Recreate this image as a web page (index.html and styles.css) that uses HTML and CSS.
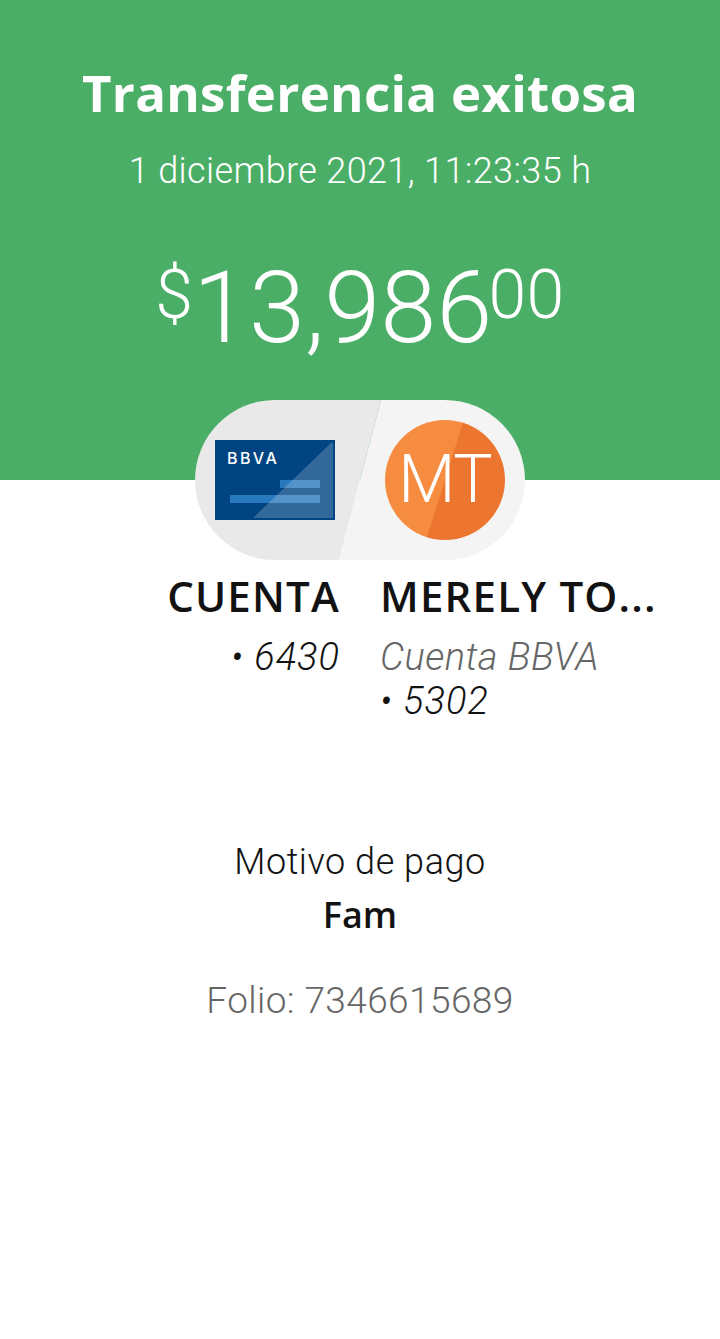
FILE: index.html
```html
<!DOCTYPE html>
<html lang="es">
<head>
<meta charset="utf-8">
<title>Transferencia exitosa</title>
<link rel="stylesheet" href="styles.css">
</head>
<body>
<header class="hero">
  <h1 class="title">Transferencia exitosa</h1>
  <p class="date">1 diciembre 2021, 11:23:35 h</p>
  <p class="amount"><span class="cur">$</span><span class="whole">13,986</span><span class="cents">00</span></p>
</header>
<div class="pill">
  <svg class="pill-bg" width="330" height="160" viewBox="0 0 330 160" aria-hidden="true">
    <path d="M80 0H186L144 160H80A80 80 0 0 1 80 0Z" fill="#e9e9e9"/>
    <path d="M186 0H250A80 80 0 0 1 250 160H144Z" fill="#f4f4f4"/>
  </svg>
  <div class="card">
    <svg class="card-art" width="120" height="80" viewBox="0 0 120 80" aria-hidden="true">
      <rect width="120" height="80" fill="#004481"/>
      <rect x="65" y="40" width="40" height="8" fill="#2879bd"/>
      <rect x="15" y="55" width="90" height="8" fill="#2879bd"/>
      <path d="M38 78L116 3C117 2 118 3 118 4V78Z" fill="#fff" fill-opacity=".2"/>
    </svg>
    <span class="card-logo">BBVA</span>
  </div>
  <div class="avatar">
    <span class="avatar-text">MT</span>
  </div>
</div>
<section class="parties">
  <div class="party party-from">
    <div class="name">CUENTA</div>
    <div class="acct">• 6430</div>
  </div>
  <div class="party party-to">
    <div class="name">MERELY TO...</div>
    <div class="bank">Cuenta BBVA</div>
    <div class="acct">• 5302</div>
  </div>
</section>
<section class="details">
  <div class="reason-label">Motivo de pago</div>
  <div class="reason">Fam</div>
  <div class="folio">Folio: 7346615689</div>
</section>
</body>
</html>
```
FILE: styles.css
```css
* { box-sizing: border-box; }
html, body { margin: 0; padding: 0; background: #fff; }
body { font-family: "Roboto", "Liberation Sans", sans-serif; color: #121212; height: 1339px; overflow: hidden; }
.hero { height: 480px; background: #4bae67; color: #fff; text-align: center; padding-top: 61px; }
.title { margin: 0; font-family: "Open Sans", sans-serif; font-size: 51px; line-height: 62px; font-weight: 700; letter-spacing: .3px; }
.date { margin: 26px 0 0; font-size: 36px; line-height: 44px; font-weight: 300; letter-spacing: .37px; }
.amount { margin: 65px 0 0; font-weight: 300; line-height: 100px; font-size: 101px; display: flex; justify-content: center; }
.cur { font-size: 68px; line-height: 74px; }
.cents { font-size: 68px; line-height: 74px; letter-spacing: .5px; margin-left: -4px; }
.pill { position: relative; width: 330px; height: 160px; margin: -80px auto 0; display: flex; align-items: center; padding: 0 20px; justify-content: space-between; }
.pill-bg { position: absolute; left: 0; top: 0; }
.card { position: relative; width: 120px; height: 80px; }
.card-art { display: block; }
.card-logo { position: absolute; left: 12px; top: 8px; color: #fff; font-family: "Inter", sans-serif; font-size: 16px; font-weight: 500; line-height: 20px; letter-spacing: 2.4px; }
.avatar { position: relative; width: 120px; height: 120px; border-radius: 50%; background: linear-gradient(107.5deg, #f68c40 0 49.7%, #ec7530 50.2%); color: #fff; display: flex; align-items: center; justify-content: center; }
.avatar-text { font-size: 66px; font-weight: 300; line-height: 1; letter-spacing: -1px; }
.parties { display: grid; grid-template-columns: 340px 1fr; column-gap: 40px; margin-top: 13px; }
.party-from { text-align: right; }
.name { font-family: "Open Sans", sans-serif; font-size: 42px; line-height: 46px; font-weight: 600; letter-spacing: 1.2px; }
.acct, .bank { font-size: 38px; line-height: 44px; font-style: italic; font-weight: 300; letter-spacing: .5px; }
.acct { letter-spacing: 1px; }
.party .bank { margin-top: 16px; color: #666; }
.party-from .acct { margin-top: 16px; }
.details { text-align: center; margin-top: 117px; }
.reason-label { font-size: 36px; line-height: 44px; font-weight: 300; letter-spacing: .55px; }
.reason { margin-top: 9px; font-family: "Open Sans", sans-serif; font-size: 36px; line-height: 44px; font-weight: 600; }
.folio { margin-top: 42px; font-size: 37px; line-height: 44px; font-weight: 300; color: #666; letter-spacing: .4px; }
```
